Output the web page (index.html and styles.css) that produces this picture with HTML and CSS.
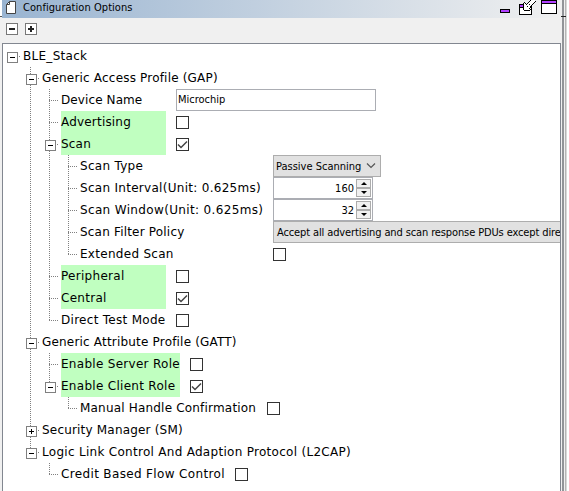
FILE: index.html
```
<!DOCTYPE html>
<html lang="en">
<head>
<meta charset="utf-8">
<title>Configuration Options</title>
<link rel="stylesheet" href="styles.css">
</head>
<body>
<div class="app">
<div class="edge-left"></div>
<main class="window">
<header class="titlebar">
<svg class="doc" width="10" height="13" viewBox="0 0 10 13"><path d="M3.500 .5h6v12h-9v-9z" fill="#fff" stroke="#444"/><path d="M3.500 .5v3h-3" fill="none" stroke="#444"/></svg>
<h1>Configuration Options</h1>
<svg class="winbtns" width="58" height="16" viewBox="0 0 58 16" shape-rendering="crispEdges"><path d="M0 9h10v4H0zM19 4h13v11H19zM41 0h16v14H41z" fill="#000"/><path d="M1 10h8v2H1zM20 5h11v2H20zM42 1h14v2H42z" fill="#b040ff"/><path d="M20 8h11v6H20zM42 4h14v9H42z" fill="#fff"/><path d="M35 0h-5l-4 5-2-2v7h7l-2-2 6-6z" fill="#fff"/><path d="M30 0h1v1h-1zM29 1h1v1h-1zM28 2h1v1h-1zM27 3h1v1h-1zM24 2h1v1h-1zM25 3h1v1h-1zM26 4h1v1h-1zM23 3h1v7h-1zM24 10h6v1h-6zM30 9h1v1h-1zM29 8h1v1h-1zM30 6h1v1h-1zM31 5h1v1h-1zM32 4h1v1h-1zM33 3h1v1h-1zM34 2h1v1h-1zM35 1h1v1h-1zM29 4h1v1h-1zM27 6h1v1h-1z" fill="#000"/></svg>
</header>
<div class="toolbar"><button class="tool"></button><button class="tool plus"></button></div>
<section class="tree">
<div class="row"><i class="g box"></i><span class="t s3">BLE_Stack</span></div>
<div class="row"><i class="g"></i><i class="g v box"></i><span class="t s2">Generic Access Profile (GAP)</span></div>
<div class="row"><i class="g"></i><i class="g v"></i><i class="g v h"></i><span class="t wa s1">Device Name</span><span class="field">Microchip</span></div>
<div class="row"><i class="g"></i><i class="g v"></i><i class="g v h"></i><span class="t wa hl s2">Advertising</span><i class="cb"></i></div>
<div class="row"><i class="g"></i><i class="g v"></i><i class="g v box"></i><span class="t wa hl s2">Scan</span><i class="cb"><svg width="11" height="11"><path d="M1 5.500L4 8.500L10 2.500" fill="none" stroke="#444" stroke-width="1.500"/></svg></i></div>
<div class="row"><i class="g"></i><i class="g v"></i><i class="g v"></i><i class="g v h"></i><span class="t wb s3">Scan Type</span><span class="combo passive"><span>Passive Scanning</span><svg width="10" height="6"><path d="M1 .5L5 4.500L9 .5" fill="none" stroke="#555" stroke-width="1.200"/></svg></span></div>
<div class="row"><i class="g"></i><i class="g v"></i><i class="g v"></i><i class="g v h"></i><span class="t wb s3">Scan Interval(Unit: 0.625ms)</span><span class="spin"><span>160</span><span class="arrows"><i></i><i></i></span></span></div>
<div class="row"><i class="g"></i><i class="g v"></i><i class="g v"></i><i class="g v h"></i><span class="t wb s4">Scan Window(Unit: 0.625ms)</span><span class="spin"><span>32</span><span class="arrows"><i></i><i></i></span></span></div>
<div class="row"><i class="g"></i><i class="g v"></i><i class="g v"></i><i class="g v h"></i><span class="t wb s2">Scan Filter Policy</span><span class="combo filter"><span>Accept all advertising and scan response PDUs except dire</span></span></div>
<div class="row"><i class="g"></i><i class="g v"></i><i class="g v"></i><i class="g end h"></i><span class="t wb s3">Extended Scan</span><i class="cb"></i></div>
<div class="row"><i class="g"></i><i class="g v"></i><i class="g v h"></i><span class="t wa hl s3">Peripheral</span><i class="cb"></i></div>
<div class="row"><i class="g"></i><i class="g v"></i><i class="g v h"></i><span class="t wa hl s3">Central</span><i class="cb"><svg width="11" height="11"><path d="M1 5.500L4 8.500L10 2.500" fill="none" stroke="#444" stroke-width="1.500"/></svg></i></div>
<div class="row"><i class="g"></i><i class="g v"></i><i class="g end h"></i><span class="t wa s3">Direct Test Mode</span><i class="cb"></i></div>
<div class="row"><i class="g"></i><i class="g v box"></i><span class="t s2">Generic Attribute Profile (GATT)</span></div>
<div class="row"><i class="g"></i><i class="g v"></i><i class="g v h"></i><span class="t wc hl s3">Enable Server Role</span><i class="cb"></i></div>
<div class="row"><i class="g"></i><i class="g v"></i><i class="g end box"></i><span class="t wc hl s3">Enable Client Role</span><i class="cb"><svg width="11" height="11"><path d="M1 5.500L4 8.500L10 2.500" fill="none" stroke="#444" stroke-width="1.500"/></svg></i></div>
<div class="row"><i class="g"></i><i class="g v"></i><i class="g"></i><i class="g end h"></i><span class="t wd s2">Manual Handle Confirmation</span><i class="cb"></i></div>
<div class="row"><i class="g"></i><i class="g v box plus"></i><span class="t s2">Security Manager (SM)</span></div>
<div class="row"><i class="g"></i><i class="g end box"></i><span class="t s3">Logic Link Control And Adaption Protocol (L2CAP)</span></div>
<div class="row"><i class="g"></i><i class="g"></i><i class="g end h"></i><span class="t we s4">Credit Based Flow Control</span><i class="cb"></i></div>
</section>
</main>
<div class="edge-right"></div>
</div>
</body>
</html>
```
FILE: styles.css
```
* { box-sizing: border-box; }
body { margin: 0; background: #f0f0f0; font-family: "DejaVu Sans Condensed", "DejaVu Sans", sans-serif; font-size: 11px; color: #000; }
.app { display: flex; width: 569px; height: 491px; overflow: hidden; }
.edge-left { width: 2px; background: linear-gradient(#fff 16px, #555 16px 17px, #f0f0f0 17px); }
.window { width: 559px; display: flex; flex-direction: column; }
.titlebar { height: 18px; flex: none; display: flex; align-items: flex-start; background: linear-gradient(90deg, #99b4d1, #f0f0f0); }
.doc { margin: 1px 0 0 4px; }
h1 { margin: 0 auto 0 7px; font-size: 11px; font-weight: 400; line-height: 15px; letter-spacing: .05px; }
.winbtns { margin-right: 3px; }
.toolbar { height: 25px; flex: none; display: flex; gap: 7px; padding: 5px 0 0 4px; background: #f0f0f0; }
.tool { width: 12px; height: 12px; padding: 0; border: 1px solid #777; background: linear-gradient(#222, #222) center / 6px 2px no-repeat #fff; }
.tool.plus { background: linear-gradient(#222, #222) center / 6px 2px no-repeat, linear-gradient(#222, #222) center / 2px 6px no-repeat, #fff; }
.tree { flex: 1; border: 1px solid #828790; border-bottom: 0; padding-top: 1px; background: #fff; overflow: hidden; }
.row { display: flex; align-items: center; height: 22px; white-space: nowrap; }
.g { position: relative; flex: none; width: 19px; height: 22px; }
.v, .end { background: repeating-linear-gradient(#808080 0 1px, transparent 1px 2px) 8px 0 / 1px 22px no-repeat; }
.end { background-size: 1px 12px; }
.h::after, .box::after { content: ""; position: absolute; left: 8px; top: 11px; width: 10px; height: 1px; background: repeating-linear-gradient(90deg, #808080 0 1px, transparent 1px 2px); }
.box::before { content: ""; position: absolute; z-index: 1; left: 4px; top: 7px; width: 9px; height: 9px; border: 1px solid #808080; background: linear-gradient(#000, #000) center / 5px 1px no-repeat #fff; }
.box.plus::before { background: linear-gradient(#000, #000) center / 5px 1px no-repeat, linear-gradient(#000, #000) center / 1px 5px no-repeat, #fff; }
.t { flex: none; padding-left: 1px; margin-right: 10px; line-height: 23px; height: 22px; font-family: "DejaVu Sans", sans-serif; font-size: 12px; }
.s1 { letter-spacing: .1px; }
.s2 { letter-spacing: .19px; }
.s3 { letter-spacing: .29px; }
.s4 { letter-spacing: .35px; }
.hl { background: linear-gradient(#c0ffc0, #c0ffc0) 1px 0 no-repeat; }
.wa { width: 106px; }
.wb { width: 184px; }
.wc { width: 120px; }
.wd { width: 178px; }
.we { width: 165px; }
.cb { flex: none; width: 13px; height: 13px; border: 1px solid #333; background: #fff; }
.cb svg { display: block; }
.field { width: 200px; height: 22px; padding-left: 1px; border: 1px solid #abadb3; line-height: 20px; }
.combo { flex: none; display: flex; align-items: center; justify-content: space-between; height: 22px; padding: 0 4px 0 2px; border: 1px solid #adadad; background: #e1e1e1; }
.passive { width: 108px; }
.filter { width: 287px; padding: 0 0 0 3px; border-right: 0; letter-spacing: -.12px; }
.spin { display: flex; align-items: center; justify-content: flex-end; width: 100px; height: 22px; border: 1px solid #abadb3; padding-right: 1px; gap: 2px; }
.arrows { display: flex; flex-direction: column; width: 15px; }
.arrows i { height: 9px; border: 1px solid #acacac; background: #f0f0f0; display: flex; align-items: center; justify-content: center; }
.arrows i::after { content: ""; border: 3px solid transparent; border-top: 0; border-bottom: 3px solid #000; }
.arrows i + i::after { border-bottom: 0; border-top: 3px solid #000; }
.edge-right { width: 8px; background: linear-gradient(#222, #222) 0 16px / 5px 1px no-repeat, linear-gradient(90deg, #f0f0f0 1px, #929498 1px 3px, #f0f0f0 3px 4px, #b4b4b4 4px 5px, #d8d8d8 5px 6px, #fff 6px); }
```
